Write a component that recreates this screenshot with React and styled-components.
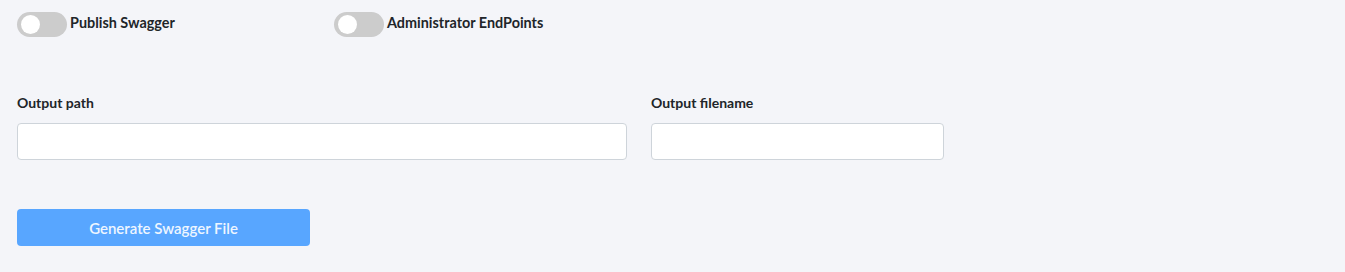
import React, { useState } from 'react';
import styled, { createGlobalStyle } from 'styled-components';

const GlobalStyle = createGlobalStyle`
  html, body {
    margin: 0;
    padding: 0;
    background: #f4f5f9;
  }
  body {
    font-family: Lato, "Liberation Sans", sans-serif;
    color: #212529;
  }
`

const Page = styled.div`
  padding: 12px 17px 24px;
  min-height: 272px;
  box-sizing: border-box;
`

const Grid = styled.div`
  display: grid;
  grid-template-columns: repeat(3, 293px);
  column-gap: 24px;
  margin-bottom: ${p => p.mb || 0}px;
`

const ToggleRow = styled.label`
  display: flex;
  align-items: center;
  gap: 3px;
  cursor: pointer;
`

const Track = styled.span`
  position: relative;
  width: 50px;
  height: 25px;
  border-radius: 13px;
  background: ${p => (p.on ? '#58a6ff' : '#cccccc')};
  transition: background 0.2s;
  flex-shrink: 0;
`

const Knob = styled.span`
  position: absolute;
  top: 3px;
  left: ${p => (p.on ? '28px' : '4px')};
  width: 19px;
  height: 19px;
  border-radius: 50%;
  background: #fff;
  transition: left 0.2s;
`

const ToggleText = styled.span`
  font-size: 14.4px;
  font-weight: 700;
  color: #212529;
  margin-top: -5px;
`

const Field = styled.div`
  grid-column: span ${p => p.span || 1};
  display: flex;
  flex-direction: column;
`

const Label = styled.label`
  font-size: 14px;
  font-weight: 700;
  margin-bottom: 12px;
  line-height: 17px;
`

const Input = styled.input`
  height: 37px;
  box-sizing: border-box;
  border: 1px solid #ced4da;
  border-radius: 4px;
  background: #fff;
  padding: 6px 12px;
  font-family: inherit;
  font-size: 14px;
  outline: none;
`

const Button = styled.button`
  height: 37px;
  border: none;
  border-radius: 4px;
  background: #58a6ff;
  color: #eef6ff;
  font-family: inherit;
  font-size: 15px;
  font-weight: 600;
  cursor: not-allowed;
`

function Toggle({ label }) {
  const [on, setOn] = useState(false)
  return (
    <ToggleRow onClick={() => setOn(!on)}>
      <Track on={on ? 1 : 0}><Knob on={on ? 1 : 0} /></Track>
      <ToggleText>{label}</ToggleText>
    </ToggleRow>
  )
}

export default function App() {
  return (
    <Page>
      <GlobalStyle />
      <Grid mb={57}>
        <Toggle label="Publish Swagger" />
        <Toggle label="Administrator EndPoints" />
      </Grid>
      <Grid mb={49}>
        <Field span={2}>
          <Label>Output path</Label>
          <Input type="text" />
        </Field>
        <Field>
          <Label>Output filename</Label>
          <Input type="text" />
        </Field>
      </Grid>
      <Grid>
        <Button disabled>Generate Swagger File</Button>
      </Grid>
    </Page>
  )
}
